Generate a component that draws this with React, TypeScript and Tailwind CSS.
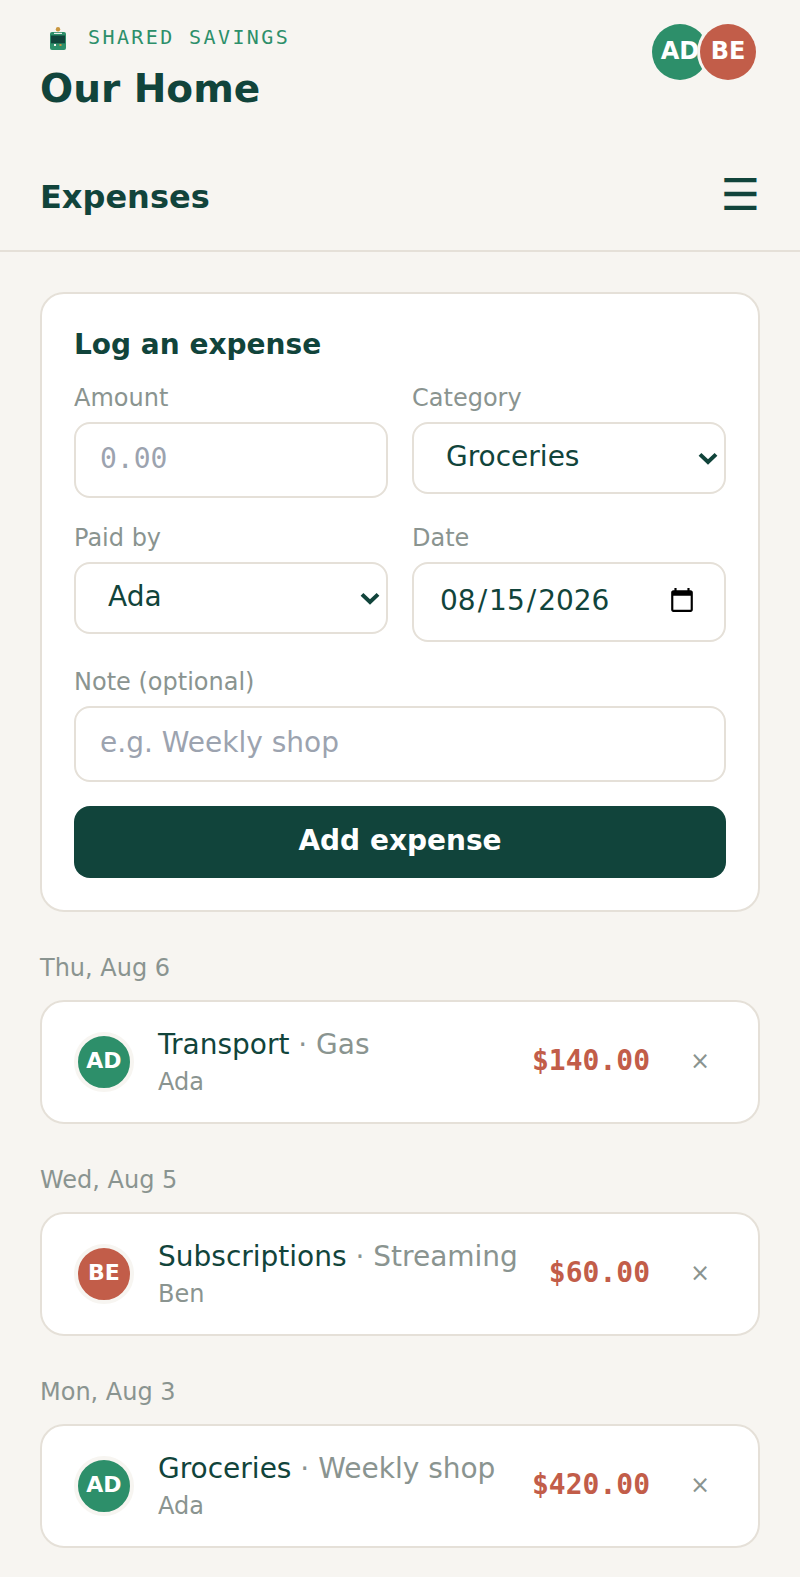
type Expense = {
  date: string;
  category: string;
  note: string;
  who: string;
  amount: string;
};

const expenses: Expense[] = [
  { date: "Thu, Aug 6", category: "Transport", note: "Gas", who: "Ada", amount: "$140.00" },
  { date: "Wed, Aug 5", category: "Subscriptions", note: "Streaming", who: "Ben", amount: "$60.00" },
  { date: "Mon, Aug 3", category: "Groceries", note: "Weekly shop", who: "Ada", amount: "$420.00" },
];

const fieldClass = "w-full rounded-lg border border-[#e5e0d8] bg-white px-3 text-sm outline-none placeholder:text-[#9ca3af]";

function JarIcon() {
  return (
    <svg width="8" height="13" viewBox="0 0 16 26" className="block">
      <circle cx="8" cy="5.3" r="2.2" fill="#c9963f" />
      <path d="M0 10a2 2 0 0 1 2-2h12a2 2 0 0 1 2 2v14a2 2 0 0 1-2 2H2a2 2 0 0 1-2-2z" fill="#2d8f6a" />
      <rect x="4" y="8.8" width="8" height="1.2" fill="#e8f1ec" />
      <rect x="1" y="11.5" width="14" height="7.8" fill="#11443b" />
      <rect x="4" y="20" width="2" height="2" fill="#f7f5f1" />
      <rect x="9.5" y="20" width="2" height="2" fill="#c9963f" />
    </svg>
  );
}

function Label({ children }: { children: string }) {
  return <label className="mb-1 block text-xs text-[#8a9490]">{children}</label>;
}

function SelectField({ value }: { value: string }) {
  return (
    <div className="relative">
      <select className={`${fieldClass} h-9 appearance-none pb-[1px] !pl-[16px]`}>
        <option>{value}</option>
      </select>
      <svg width="10" height="7" viewBox="0 0 10 7" className="pointer-events-none absolute right-[4px] top-[15px]">
        <path d="M1 1.2 5 5 9 1.2" fill="none" stroke="#11443b" strokeWidth="2" />
      </svg>
    </div>
  );
}

function Row({ expense }: { expense: Expense }) {
  const isAda = expense.who === "Ada";
  return (
    <section className="mt-5">
      <p className="mb-2 text-xs text-[#8a9490]">{expense.date}</p>
      <div className="flex h-[62px] items-center rounded-xl border border-[#e5e0d8] bg-white px-4">
        <div
          className={`flex h-[30px] w-[30px] shrink-0 items-center justify-center rounded-full border-2 border-[#f7f5f1] pb-[2px] text-[11px] font-bold text-white ${
            isAda ? "bg-[#2d8f6a]" : "bg-[#c25d49]"
          }`}
        >
          {isAda ? "AD" : "BE"}
        </div>
        <div className="-mt-[1px] ml-3 min-w-0 flex-1">
          <p className="whitespace-nowrap text-sm leading-5">
            {expense.category} <span className="text-[#8a9490]">· {expense.note}</span>
          </p>
          <p className="mt-[0.5px] text-xs text-[#8a9490]">{expense.who}</p>
        </div>
        <span className="-mt-[1px] font-['DejaVu_Sans_Mono',monospace] text-sm font-bold text-[#c25d49]">{expense.amount}</span>
        <button className="-mt-[1px] ml-3 w-[26px] text-xs leading-none text-[#8a9490]">×</button>
      </div>
    </section>
  );
}

export default function App() {
  return (
    <main className="min-h-[789px] bg-[#f7f5f1] font-['DejaVu_Sans',sans-serif] text-[#11443b] [zoom:2]">
      <header className="flex items-start justify-between pl-5 pr-[22px] pt-3">
        <div>
          <div className="flex items-center">
            <span className="ml-[5px] mr-[11px]">
              <JarIcon />
            </span>
            <span className="font-['DejaVu_Sans_Mono',monospace] text-[10px] leading-[13px] tracking-[0.12em] text-[#2d8f6a]">
              SHARED SAVINGS
            </span>
          </div>
          <h1 className="mt-[7px] text-[19.5px] font-bold leading-[25px]">Our Home</h1>
        </div>
        <div className="flex">
          <div className="flex h-7 w-7 items-center justify-center rounded-full bg-[#2d8f6a] pb-[1px] text-xs font-bold text-white">AD</div>
          <div className="-ml-1 flex h-7 w-7 items-center justify-center rounded-full bg-[#c25d49] pb-[1px] text-xs font-bold text-white ring-[1.5px] ring-[#f7f5f1]">BE</div>
        </div>
      </header>

      <div className="mt-[15.5px] flex h-[53.5px] items-center justify-between border-b border-[#e5e0d8] px-5 pb-[1px]">
        <h2 className="text-base font-bold">Expenses</h2>
        <button className="-mt-[2px] text-[22px] leading-none">☰</button>
      </div>

      <div className="px-5 pt-5">
        <form className="space-y-3 rounded-xl border border-[#e5e0d8] bg-white p-4">
          <h3 className="-mt-[0.5px] !mb-[8.5px] text-sm font-bold">Log an expense</h3>
          <div className="!mt-0 grid grid-cols-2 items-start gap-x-3">
            <div>
              <Label>Amount</Label>
              <input placeholder="0.00" className={`${fieldClass} h-[38px] pb-[2px] font-['DejaVu_Sans_Mono',monospace]`} />
            </div>
            <div>
              <Label>Category</Label>
              <SelectField value="Groceries" />
            </div>
          </div>
          <div className="grid grid-cols-2 items-start gap-x-3">
            <div>
              <Label>Paid by</Label>
              <SelectField value="Ada" />
            </div>
            <div>
              <Label>Date</Label>
              <input type="date" defaultValue="2026-08-15" className={`${fieldClass} h-10 pb-[1px]`} />
            </div>
          </div>
          <div>
            <Label>Note (optional)</Label>
            <input placeholder="e.g. Weekly shop" className={`${fieldClass} h-[38px] pb-[2px]`} />
          </div>
          <button type="button" className="h-9 w-full rounded-lg bg-[#11443b] pb-[1px] text-sm font-bold text-white">
            Add expense
          </button>
        </form>

        {expenses.map((expense) => (
          <Row key={expense.date} expense={expense} />
        ))}
      </div>
    </main>
  );
}
